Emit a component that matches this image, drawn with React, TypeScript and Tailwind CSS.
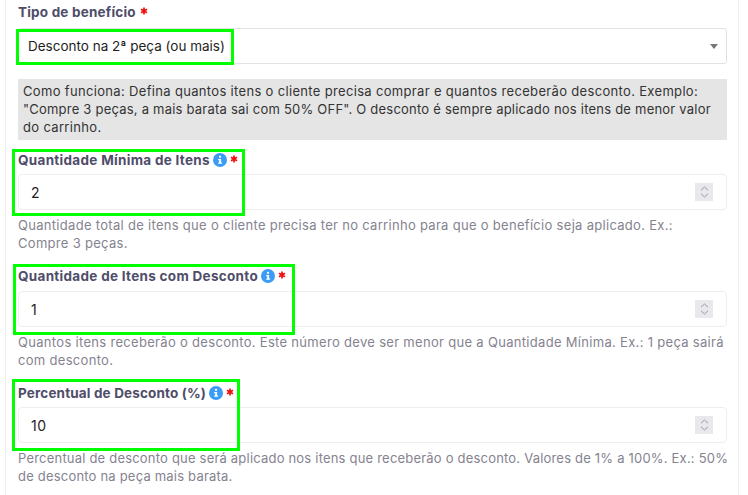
import React from 'react';

const fontStack = { fontFamily: 'Inter, "Open Sans", sans-serif' };

function InfoIcon() {
	return (
		<svg width="14" height="14" viewBox="0 0 14 14" className="shrink-0">
			<circle cx="7" cy="7" r="7" fill="#3b9cf5" />
			<rect x="6" y="2.8" width="2.1" height="2" rx="0.6" fill="#fff" />
			<path d="M5.2 6h2.9v3.6h1v1.2H5.2V9.6h1V7.2h-1z" fill="#fff" />
		</svg>
	);
}

function Required({ className }: { className: string }) {
	return (
		<svg width="8" height="8" viewBox="0 0 8 8" className={className}>
			<path d="M4 .6v6.8M1 2.2l6 3.6M7 2.2 1 5.800" stroke="#f01010" strokeWidth="1.7" />
		</svg>
	);
}

interface FieldProps {
	label: string;
	labelClass: string;
	value: string;
	help: string[];
	helpClass: string;
	top: string;
	gap: string;
}

function NumberField({ label, labelClass, value, help, helpClass, top, gap }: FieldProps) {
	return (
		<div className={top}>
			<div className="flex items-center h-[17px]">
				<span className={`text-[13.5px] leading-[17px] font-bold text-[#4f4d69] ${labelClass}`}>{label}</span>
				<span className="ml-[3px] -mt-[2px]">
					<InfoIcon />
				</span>
				<Required className="ml-[3px] -mt-[3px]" />
			</div>
			<div className={`${gap} h-[36px] rounded-[4px] border border-[#eeeeee] bg-white flex items-center justify-between pl-[12px] pr-[13px]`}>
				<span className="text-[14px] text-[#1e1e1e] tracking-[0.5px]">{value}</span>
				<span className="w-[18px] h-[18px] bg-[#e9e9ed] flex flex-col items-center justify-center gap-[2px]">
					<svg width="9" height="5" viewBox="0 0 9 5">
						<path d="M1 4.200 4.500 1 8 4.200" fill="none" stroke="#9a9aa2" strokeWidth="1" />
					</svg>
					<svg width="9" height="5" viewBox="0 0 9 5">
						<path d="M1 .8 4.500 4 8 .8" fill="none" stroke="#9a9aa2" strokeWidth="1" />
					</svg>
				</span>
			</div>
			<p className={`mt-[6px] text-[13px] leading-[18px] text-[#85838f] whitespace-nowrap ${helpClass}`}>
				{help.map((line) => (
					<span key={line} className="block">
						{line}
					</span>
				))}
			</p>
		</div>
	);
}

export default function App() {
	return (
		<div className="relative w-[748px] h-[495px] overflow-hidden bg-white" style={fontStack}>
			<div className="mx-[5px] w-[734px] h-[495px] border-x border-[#eeeeee] pl-[12px] pr-[11px] pt-[4px]">
				<div className="flex items-center h-[17px]">
					<span className="text-[13.5px] leading-[17px] font-bold text-[#4f4d69] tracking-[0.2px]">Tipo de benefício</span>
					<Required className="ml-[4px] -mt-[3px]" />
				</div>
				<div className="mt-[7px] h-[36px] rounded-[3px] border border-[#e2e2e2] bg-white flex items-center justify-between pl-[9px] pr-[8px]">
					<span className="text-[13.5px] text-[#1e1e1e]">Desconto na 2ª peça (ou mais)</span>
					<span className="w-0 h-0 border-x-[4px] border-x-transparent border-t-[5px] border-t-[#777777]" />
				</div>
				<div className="mt-[15px] h-[61px] bg-[#e5e5e5] pl-[5px] pt-[3px] text-[13px] leading-[18px] text-[#333333] whitespace-nowrap">
					<span className="block tracking-[0.33px]">Como funciona: Defina quantos itens o cliente precisa comprar e quantos receberão desconto. Exemplo:</span>
					<span className="block tracking-[0.22px]">"Compre 3 peças, a mais barata sai com 50% OFF". O desconto é sempre aplicado nos itens de menor valor</span>
					<span className="block tracking-[0.33px]">do carrinho.</span>
				</div>
				<NumberField
					top="mt-[12px]"
					gap="mt-[5px]"
					labelClass="tracking-[0.3px]"
					helpClass="tracking-[0.3px]"
					label="Quantidade Mínima de Itens"
					value="2"
					help={[
						'Quantidade total de itens que o cliente precisa ter no carrinho para que o benefício seja aplicado. Ex.:',
						'Compre 3 peças.',
					]}
				/>
				<NumberField
					top="mt-[16px]"
					gap="mt-[6px]"
					labelClass="tracking-[0.3px]"
					helpClass="tracking-[0.31px]"
					label="Quantidade de Itens com Desconto"
					value="1"
					help={[
						'Quantos itens receberão o desconto. Este número deve ser menor que a Quantidade Mínima. Ex.: 1 peça sairá',
						'com desconto.',
					]}
				/>
				<NumberField
					top="mt-[16px]"
					gap="mt-[5px]"
					labelClass="tracking-[0.15px]"
					helpClass="tracking-[0.2px]"
					label="Percentual de Desconto (%)"
					value="10"
					help={[
						'Percentual de desconto que será aplicado nos itens que receberão o desconto. Valores de 1% a 100%. Ex.: 50%',
						'de desconto na peça mais barata.',
					]}
				/>
			</div>
			{/* green highlight boxes drawn over the form */}
			<div className="absolute left-[16px] top-[29px] w-[218px] h-[36px] border-[3px] border-[#00ff00]" />
			<div className="absolute left-[12px] top-[149px] w-[233px] h-[67px] border-[3px] border-[#00ff00]" />
			<div className="absolute left-[13px] top-[264px] w-[282px] h-[71px] border-[3px] border-[#00ff00]" />
			<div className="absolute left-[12px] top-[379px] w-[228px] h-[72px] border-[3px] border-[#00ff00]" />
		</div>
	);
}
